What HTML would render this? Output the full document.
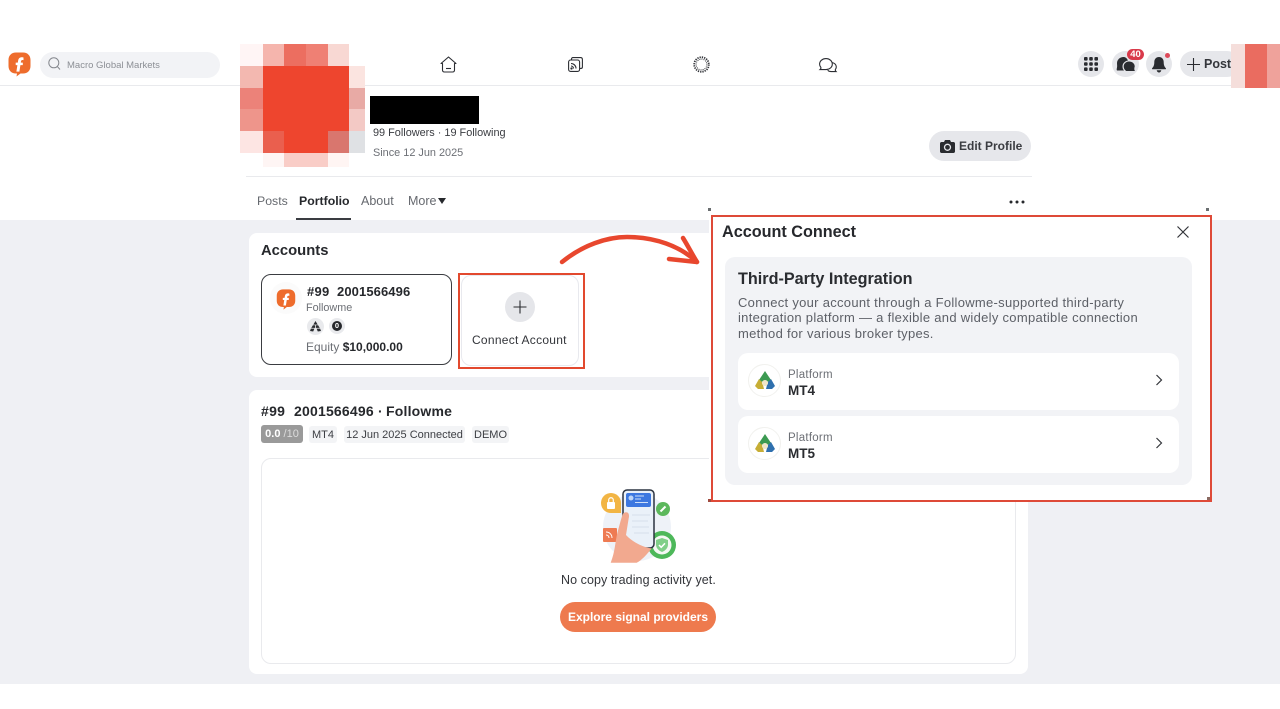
<!DOCTYPE html>
<html><head><meta charset="utf-8"><title>Portfolio</title>
<style>
html,body{margin:0;padding:0;background:#fff}
body{width:1280px;height:709px;position:relative;overflow:hidden;font-family:"Liberation Sans",sans-serif;color:#26282c}
.a,.t{position:absolute}
.t{white-space:nowrap;line-height:1}
.m{position:absolute}
svg{position:absolute;overflow:visible}
.tag{position:absolute;top:426px;height:17px;background:#f3f4f6;border-radius:3px;font-size:11px;line-height:18px;text-align:center;color:#3c3e43;white-space:nowrap}
.row{position:absolute;left:738px;width:441px;height:57px;background:#fff;border-radius:10px}
.mk{position:absolute;width:3px;height:3px;background:#6a6e70}
</style></head><body>

<!-- page regions -->
<div class="a" style="left:0;top:220px;width:1280px;height:464px;background:#eff0f4"></div>
<div class="a" style="left:0;top:85px;width:1280px;height:1px;background:#e9eaed"></div>

<!-- logo -->
<svg style="left:8px;top:52px" width="23" height="25" viewBox="0 0 23 25"><path d="M8 .5h7c4.500 0 7.500 3 7.500 7.500v6c0 4.500-3 7.500-7.500 7.500h-2.500l-4 3 .5-3H8c-4.500 0-7.500-3-7.500-7.500V8C.5 3.500 3.500.5 8 .5z" fill="#ee6c2c"/><path d="M15.500 5.500c-3-.8-5 .4-5.400 3.300l-.3 1.800H7.700v2.500h1.700l-1 6.500h3l1-6.500h2.400v-2.500h-2l.2-1.300c.2-1.100 1-1.500 2.500-1.100z" fill="#fff"/></svg>

<!-- search -->
<div class="a" style="left:40px;top:52px;width:180px;height:26px;border-radius:13px;background:#f2f3f6"></div>
<svg style="left:48px;top:57px" width="13" height="14" viewBox="0 0 13 14" fill="none" stroke="#85888e" stroke-width="1"><circle cx="5.800" cy="5.800" r="5"/><path d="M9.500 9.700l2.500 2.800"/></svg>
<div class="t" style="left:67px;top:60.500px;font-size:9.500px;color:#8c8f95">Macro Global Markets</div>

<!-- nav icons -->
<svg style="left:440px;top:56px" width="17" height="17" viewBox="0 0 17 17" fill="none" stroke="#2c2e33" stroke-width="1.100"><path d="M8.500 1L1 7.500h1.500v6.500c0 1.300.7 2 2 2h8c1.300 0 2-.7 2-2V7.500H16z" stroke-linejoin="round"/><path d="M6 12.500h5"/></svg>
<svg style="left:568px;top:57px" width="15" height="15" viewBox="0 0 15 15" fill="none" stroke="#2c2e33" stroke-width="1.100"><rect x=".6" y="3" width="11" height="11.400" rx="2"/><path d="M3.500 3V2c0-.9.600-1.400 1.400-1.400h7.600c1.100 0 1.900.8 1.900 1.900V10c0 .8-.5 1.400-1.400 1.400h-1"/><path d="M3 6.500c2.800 0 5 2.200 5 5M3 9c1.400 0 2.500 1.100 2.500 2.500"/><circle cx="3.500" cy="11.500" r=".6" fill="#2c2e33"/></svg>
<svg style="left:693px;top:56px" width="17" height="17" viewBox="0 0 17 17" fill="none" stroke="#33353a"><circle cx="8.500" cy="8.500" r="7.300" stroke-width="1.800" stroke-dasharray="1.300 1"/><circle cx="8.500" cy="8.500" r="5.400" stroke-width="1" stroke-dasharray="1 1.100"/></svg>
<svg style="left:819px;top:58px" width="18" height="15" viewBox="0 0 18 15" fill="none" stroke="#2c2e33" stroke-width="1.100"><path d="M7 .6c3.500 0 6.300 2.400 6.300 5.500S10.500 11.600 7 11.600H1c1-.9 1-1.900.8-2.300C1 8.400.6 7.300.6 6.100.6 3 3.500.6 7 .6z"/><path d="M13 4.500c2.400.4 4.300 2.200 4.300 4.400 0 1-.4 1.800-.9 2.500-.2.500-.1 1.400.7 2.200h-5c-1.300 0-2.600-.4-3.400-1.400"/></svg>

<!-- right header -->
<div class="a" style="left:1078px;top:51px;width:26px;height:26px;border-radius:50%;background:#e5e6ea"></div>
<svg style="left:1084px;top:57px" width="14" height="14" fill="#2a2c30"><rect width="3.600" height="3.600" rx="1"/><rect x="5.200" width="3.600" height="3.600" rx="1"/><rect x="10.400" width="3.600" height="3.600" rx="1"/><rect y="5.200" width="3.600" height="3.600" rx="1"/><rect x="5.200" y="5.200" width="3.600" height="3.600" rx="1"/><rect x="10.400" y="5.200" width="3.600" height="3.600" rx="1"/><rect y="10.400" width="3.600" height="3.600" rx="1"/><rect x="5.200" y="10.400" width="3.600" height="3.600" rx="1"/><rect x="10.400" y="10.400" width="3.600" height="3.600" rx="1"/></svg>
<div class="a" style="left:1112px;top:51px;width:27px;height:26px;border-radius:50%;background:#e5e6ea"></div>
<svg style="left:1117px;top:57px" width="18" height="15" viewBox="0 0 18 15" fill="#2a2c30"><path d="M6.500 0C3 0 0 2.700 0 6.200c0 1.500.4 3-.1 4.800-.2.800-.4 2 .1 2.500h7c-1-1-1.500-2.500-1.500-4 0-3 2.200-5.500 5.500-6C10 1.300 8.400 0 6.500 0z"/><path d="M12 4.500c-3 0-5.300 2.200-5.300 5 0 2 1 3.500 2.500 4.500H18c-.7-.7-.8-2-.6-3.300.2-.7.300-1 .3-1.500 0-2.600-2.500-4.700-5.700-4.700z"/></svg>
<div class="a" style="left:1127px;top:48.500px;width:17px;height:11px;border-radius:6px;background:#d9394a;color:#fff;font-size:9.500px;font-weight:bold;line-height:11px;text-align:center">40</div>
<div class="a" style="left:1146px;top:51px;width:26px;height:26px;border-radius:50%;background:#e5e6ea"></div>
<svg style="left:1152px;top:57px" width="14" height="16" viewBox="0 0 14 16" fill="#2a2c30"><path d="M7 0C4 0 2.300 2.300 2.300 5c0 3.200-.8 4.800-2.100 6.100-.4.500-.2 1.200.5 1.200h12.600c.7 0 .9-.7.500-1.200C12.500 9.800 11.700 8.200 11.700 5 11.700 2.300 10 0 7 0z"/><path d="M4.700 13.300c.3 1.500 1.100 2.200 2.300 2.200s2-.7 2.300-2.200z"/></svg>
<div class="a" style="left:1165px;top:53px;width:5px;height:5px;border-radius:50%;background:#dd4a5a"></div>
<div class="a" style="left:1180px;top:51px;width:60px;height:26px;border-radius:13px;background:#e6e7eb"></div>
<svg style="left:1186px;top:57px" width="15" height="15" fill="none" stroke="#2a2c30" stroke-width="1.100"><path d="M7.500 1v13M1 7.500h13"/></svg>
<div class="t" style="left:1204px;top:57.500px;font-size:12.500px;font-weight:bold;color:#34363b">Post</div>

<!-- right mosaic -->
<div class="m" style="left:1231px;top:44px;width:14px;height:44px;background:#f5dedb"></div>
<div class="m" style="left:1245px;top:44px;width:22px;height:44px;background:#ea6c60"></div>
<div class="m" style="left:1267px;top:44px;width:13px;height:44px;background:#efa29b"></div>

<!-- left mosaic -->
<div class="m" style="left:240px;top:44px;width:23px;height:22px;background:#fff5f5"></div>
<div class="m" style="left:263px;top:44px;width:21px;height:22px;background:#f5b5ad"></div>
<div class="m" style="left:284px;top:44px;width:22px;height:22px;background:#ec6e60"></div>
<div class="m" style="left:306px;top:44px;width:22px;height:22px;background:#ef8074"></div>
<div class="m" style="left:328px;top:44px;width:21px;height:22px;background:#f8d8d3"></div>
<div class="m" style="left:240px;top:66px;width:23px;height:22px;background:#f3b8b0"></div>
<div class="m" style="left:349px;top:66px;width:16px;height:22px;background:#fbe4e0"></div>
<div class="m" style="left:240px;top:88px;width:23px;height:21px;background:#ec8279"></div>
<div class="m" style="left:349px;top:88px;width:16px;height:21px;background:#e8aaa5"></div>
<div class="m" style="left:240px;top:109px;width:23px;height:22px;background:#ee958b"></div>
<div class="m" style="left:349px;top:109px;width:16px;height:22px;background:#f3c9c5"></div>
<div class="m" style="left:240px;top:131px;width:23px;height:22px;background:#fde5e3"></div>
<div class="m" style="left:349px;top:131px;width:16px;height:22px;background:#dfe1e4"></div>
<div class="m" style="left:263px;top:66px;width:86px;height:87px;background:#ee452e"></div>
<div class="m" style="left:263px;top:131px;width:21px;height:22px;background:#ea5f4e"></div>
<div class="m" style="left:328px;top:131px;width:21px;height:22px;background:#d9766e"></div>
<div class="m" style="left:263px;top:153px;width:21px;height:14px;background:#fef5f4"></div>
<div class="m" style="left:284px;top:153px;width:44px;height:14px;background:#f9cdc7"></div>
<div class="m" style="left:328px;top:153px;width:21px;height:14px;background:#fff5f3"></div>

<!-- profile -->
<div class="a" style="left:370px;top:96px;width:109px;height:28px;background:#000"></div>
<div class="t" style="left:373px;top:127.500px;font-size:10.900px;color:#3a3c41">99 Followers · 19 Following</div>
<div class="t" style="left:373px;top:147.500px;font-size:10.900px;color:#6c6f75">Since 12 Jun 2025</div>
<div class="a" style="left:929px;top:131px;width:102px;height:30px;border-radius:15px;background:#e6e7eb"></div>
<svg style="left:940px;top:140px" width="15" height="13" viewBox="0 0 15 13"><path d="M1.500 2H4l1-2h5l1 2h2.500c.8 0 1.500.7 1.500 1.500v8c0 .8-.7 1.500-1.500 1.500h-12C.7 13 0 12.300 0 11.500v-8C0 2.700.7 2 1.500 2z" fill="#2a2c30"/><circle cx="7.500" cy="7.300" r="3" fill="none" stroke="#e6e7eb" stroke-width="1.300"/></svg>
<div class="t" style="left:959px;top:140px;font-size:12px;font-weight:bold;color:#3a3c41">Edit Profile</div>
<div class="a" style="left:246px;top:176px;width:786px;height:1px;background:#e9eaed"></div>

<!-- tabs -->
<div class="t" style="left:257px;top:195px;font-size:12.300px;color:#66696f">Posts</div>
<div class="t" style="left:299px;top:195px;font-size:12.300px;font-weight:bold;color:#26282c">Portfolio</div>
<div class="a" style="left:296px;top:218px;width:55px;height:2px;background:#3a3c41"></div>
<div class="t" style="left:361px;top:195px;font-size:12.500px;color:#66696f">About</div>
<div class="t" style="left:408px;top:195px;font-size:12.500px;color:#66696f">More</div>
<svg style="left:438px;top:198px" width="8" height="6"><path d="M0 0h8L4 6z" fill="#26282c"/></svg>
<svg style="left:1009px;top:200px" width="16" height="4" fill="#26282c"><circle cx="2" cy="2" r="1.500"/><circle cx="8" cy="2" r="1.500"/><circle cx="14" cy="2" r="1.500"/></svg>

<!-- accounts card -->
<div class="a" style="left:249px;top:233px;width:779px;height:144px;background:#fff;border-radius:8px"></div>
<div class="t" style="left:261px;top:244px;font-size:14.800px;font-weight:bold;color:#26282c">Accounts</div>
<div class="a" style="left:261px;top:274px;width:189px;height:89px;border:1px solid #3a3c41;border-radius:10px;background:#fff"></div>
<div class="a" style="left:270px;top:282px;width:32px;height:32px;border-radius:50%;background:#fbfbfb"></div>
<svg style="left:276px;top:289px" width="20" height="21" viewBox="0 0 23 25"><path d="M8 .5h7c4.500 0 7.500 3 7.500 7.500v6c0 4.500-3 7.500-7.500 7.500h-2.500l-4 3 .5-3H8c-4.500 0-7.500-3-7.500-7.500V8C.5 3.500 3.500.5 8 .5z" fill="#ee6c2c"/><path d="M15.500 5.500c-3-.8-5 .4-5.400 3.300l-.3 1.800H7.700v2.500h1.700l-1 6.500h3l1-6.500h2.400v-2.500h-2l.2-1.300c.2-1.100 1-1.500 2.500-1.100z" fill="#fff"/></svg>
<div class="t" style="left:307px;top:285px;font-size:13px;font-weight:bold;color:#26282c;letter-spacing:.3px">#99</div>
<div class="t" style="left:337px;top:285px;font-size:13px;font-weight:bold;color:#26282c;letter-spacing:.1px">2001566496</div>
<div class="t" style="left:306px;top:302.500px;font-size:10.800px;color:#6c6f75">Followme</div>
<div class="a" style="left:307px;top:318px;width:17px;height:17px;border-radius:50%;background:#e9eaed"></div>
<svg style="left:310px;top:321px" width="11" height="11" viewBox="0 0 11 11" fill="#2a2c30"><path d="M5.500 0l2.200 3.600H3.300zM2.900 4.300h2.200v2.600H1.300zM5.900 4.300h2.200l1.600 2.600H5.900zM.9 7.600h3.500L3.200 10.500 0 10zM6.600 7.600h3.500l.9 2.400-3.200.5z"/></svg>
<div class="a" style="left:329px;top:318px;width:16px;height:16px;border-radius:50%;background:#e9eaed"></div>
<div class="a" style="left:332px;top:321px;width:10px;height:10px;border-radius:50%;background:#26282c;color:#fff;font-size:7.500px;font-weight:bold;line-height:10px;text-align:center">0</div>
<div class="t" style="left:306px;top:341px;font-size:12px;color:#6c6f75">Equity <span style="font-weight:bold;color:#26282c">$10,000.00</span></div>

<!-- connect account -->
<div class="a" style="left:461px;top:275px;width:116px;height:89px;border:1px solid #e8e9ee;border-radius:10px;background:#fff"></div>
<div class="a" style="left:458px;top:273px;width:123px;height:92px;border:2px solid #e2492e"></div>
<div class="a" style="left:505px;top:292px;width:30px;height:30px;border-radius:50%;background:#e5e6ea"></div>
<svg style="left:513px;top:300px" width="14" height="14" fill="none" stroke="#2a2c30" stroke-width="1.100"><path d="M7 .5v13M.5 7h13"/></svg>
<div class="t" style="left:472px;top:334px;font-size:12px;letter-spacing:.27px;color:#33353a">Connect Account</div>

<!-- arrow -->
<svg style="left:555px;top:230px" width="150" height="40" viewBox="0 0 150 40" fill="none" stroke="#e8472e" stroke-width="4.500" stroke-linecap="round" stroke-linejoin="round"><path d="M7 32C28 15 52 7 72 7c28 0 53 9 70 25"/><path d="M128 8c5 8 9 16 14 24-9-1-19-2-28-3"/></svg>

<!-- detail card -->
<div class="a" style="left:249px;top:390px;width:779px;height:284px;background:#fff;border-radius:8px"></div>
<div class="t" style="left:261px;top:404px;font-size:14px;font-weight:bold;color:#26282c;letter-spacing:.3px">#99</div>
<div class="t" style="left:294px;top:404px;font-size:14px;font-weight:bold;color:#26282c;letter-spacing:.2px">2001566496</div>
<div class="t" style="left:378px;top:404px;font-size:14px;font-weight:bold;color:#26282c">·</div>
<div class="t" style="left:386px;top:404px;font-size:14px;font-weight:bold;color:#26282c;letter-spacing:.2px">Followme</div>
<div class="a" style="left:261px;top:425px;width:42px;height:18px;border-radius:3px;background:#9a9a9a;color:#fff;font-size:11px;line-height:18px;text-align:center;white-space:nowrap"><b>0.0</b> <span style="color:#dcdcdc">/10</span></div>
<div class="tag" style="left:309px;width:28px">MT4</div>
<div class="tag" style="left:344px;width:121px">12 Jun 2025 Connected</div>
<div class="tag" style="left:472px;width:37px">DEMO</div>
<div class="a" style="left:261px;top:458px;width:753px;height:204px;border:1px solid #e9eaed;border-radius:10px"></div>

<!-- illustration -->
<svg style="left:598px;top:488px" width="80" height="76" viewBox="0 0 80 76">
<circle cx="39" cy="39" r="34" fill="#eef2f8"/>
<path d="M13 5a10 10 0 0 1 10 10v10H13a10 10 0 0 1 0-20z" fill="#f2b544"/><rect x="9" y="14" width="8" height="7" rx="1" fill="#fff"/><path d="M10.700 14v-2c0-3 4.600-3 4.600 0v2" fill="none" stroke="#fff" stroke-width="1.200"/>
<circle cx="65" cy="21" r="7" fill="#5cb85c"/><path d="M62.500 23.500l5-5" stroke="#fff" stroke-width="2"/>
<circle cx="64" cy="57" r="14" fill="#4db85a"/><circle cx="64" cy="57" r="9.500" fill="#f4f8f4"/><path d="M64 50l6 2v4.500c0 3.500-2.500 6-6 7.500-3.500-1.500-6-4-6-7.500V52z" fill="#7fcf88"/><path d="M61 57l2.200 2.300 3.800-4" fill="none" stroke="#fff" stroke-width="1.500"/>
<rect x="5" y="40" width="14" height="14" rx="1" fill="#ee7b53"/><path d="M8 44c3.500 0 6 2.500 6 6M8 47c1.800 0 3 1.200 3 3" fill="none" stroke="#fff" stroke-width="1"/>
<rect x="25" y="2" width="31" height="58" rx="4" fill="#eaf1f9" stroke="#2b3340" stroke-width="1.500"/>
<rect x="28" y="5" width="25" height="14" rx="2" fill="#3d78e0"/><circle cx="33" cy="10" r="2.500" fill="#bcd4f6"/><path d="M37 8h9M37 11h6M37 14.500h13" stroke="#cfe0f9" stroke-width="1"/>
<path d="M34 27h18M34 33h16M34 39h17M36 45h15" stroke="#d6e0ec" stroke-width="1"/>
<path d="M25.300 25.300C29.300 22.700 32 25.300 30.700 30.300L28 47C35.300 55.300 48.700 60.300 53.700 60.300 48.700 67 42 73.700 38.700 74.700L12.700 74.700C17 63.700 17 55.300 19.300 45.300 22 35.300 23.700 28.300 25.300 25.300z" fill="#f2a98f"/>
</svg>
<div class="t" style="left:561px;top:574px;font-size:12.500px;letter-spacing:.07px;color:#33353a">No copy trading activity yet.</div>
<div class="a" style="left:560px;top:602px;width:156px;height:30px;border-radius:15px;background:#ee7a4e;color:#fff;font-size:12px;font-weight:bold;line-height:30px;text-align:center">Explore signal providers</div>

<!-- modal -->
<div class="a" style="left:709px;top:215px;width:501px;height:286px;background:#fff"></div>
<div class="a" style="left:711px;top:215px;width:497px;height:283px;border:2px solid #de4a38;background:#fff"></div>
<div class="mk" style="left:708px;top:208px"></div>
<div class="mk" style="left:1206px;top:208px"></div>
<div class="mk" style="left:708px;top:499px;background:#a04a3e"></div>
<div class="mk" style="left:1207px;top:497px;background:#8a6a62"></div>
<div class="t" style="left:722px;top:223.500px;font-size:16.200px;font-weight:bold;color:#26282c">Account Connect</div>
<svg style="left:1177px;top:226px" width="12" height="12" fill="none" stroke="#33353a" stroke-width="1.200"><path d="M.5.500l11 11M11.500.500l-11 11"/></svg>
<div class="a" style="left:725px;top:257px;width:467px;height:228px;border-radius:10px;background:#f2f3f6"></div>
<div class="t" style="left:738px;top:271px;font-size:16.200px;font-weight:bold;color:#2a2c30">Third-Party Integration</div>
<div class="t" style="left:738px;top:295px;font-size:13px;line-height:15.300px;letter-spacing:.29px;color:#5d6067">Connect your account through a Followme-supported third-party<br>integration platform — a flexible and widely compatible connection<br>method for various broker types.</div>

<div class="row" style="top:353px"></div>
<div class="a" style="left:748px;top:364px;width:33px;height:33px;border-radius:50%;background:#fff;border:1px solid #f1f1ee;box-sizing:border-box"></div>
<svg style="left:755px;top:371px" width="20" height="19" viewBox="0 0 20 19"><path d="M10 0L16 9 13 11A3.500 3.500 0 0 0 7 11L4 9Z" fill="#3c9a52"/><path d="M4 8L7 11A3.500 3.500 0 0 0 8 14L9 18H3L0 15Z" fill="#c7ae35"/><path d="M16 8L13 11A3.500 3.500 0 0 1 12 14L11 18H17L20 15Z" fill="#2f70ae"/><circle cx="10" cy="12" r="3" fill="#f0e6c8"/></svg>
<div class="t" style="left:788px;top:369.500px;font-size:11.500px;letter-spacing:.25px;color:#6c6f75">Platform</div>
<div class="t" style="left:788px;top:384px;font-size:13.500px;font-weight:bold;color:#2a2c30">MT4</div>
<svg style="left:1155px;top:374px" width="8" height="12" fill="none" stroke="#33353a" stroke-width="1.200"><path d="M1.500 1l5 5-5 5"/></svg>

<div class="row" style="top:416px"></div>
<div class="a" style="left:748px;top:427px;width:33px;height:33px;border-radius:50%;background:#fff;border:1px solid #f1f1ee;box-sizing:border-box"></div>
<svg style="left:755px;top:434px" width="20" height="19" viewBox="0 0 20 19"><path d="M10 0L16 9 13 11A3.500 3.500 0 0 0 7 11L4 9Z" fill="#3c9a52"/><path d="M4 8L7 11A3.500 3.500 0 0 0 8 14L9 18H3L0 15Z" fill="#c7ae35"/><path d="M16 8L13 11A3.500 3.500 0 0 1 12 14L11 18H17L20 15Z" fill="#2f70ae"/><circle cx="10" cy="12" r="3" fill="#f0e6c8"/></svg>
<div class="t" style="left:788px;top:432.500px;font-size:11.500px;letter-spacing:.25px;color:#6c6f75">Platform</div>
<div class="t" style="left:788px;top:447px;font-size:13.500px;font-weight:bold;color:#2a2c30">MT5</div>
<svg style="left:1155px;top:437px" width="8" height="12" fill="none" stroke="#33353a" stroke-width="1.200"><path d="M1.500 1l5 5-5 5"/></svg>

</body></html>
